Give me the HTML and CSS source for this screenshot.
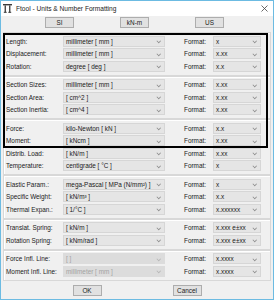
FILE: index.html
```html
<!DOCTYPE html>
<html lang="en">
<head>
  <meta charset="UTF-8">
  <title>Ftool - Units &amp; Number Formatting</title>
  <link rel="stylesheet" href="styles.css">
</head>
<body>
  <div class="window">
    <!-- Title Bar -->
    <div class="titlebar">
      <svg class="app-icon" width="9" height="9" viewBox="0 0 9 9">
        <rect x="0" y="0" width="9" height="1.4" fill="#3a3a3a"/>
        <rect x="1.6" y="1.4" width="1.3" height="7" fill="#3a3a3a"/>
        <rect x="6.1" y="1.4" width="1.3" height="7" fill="#3a3a3a"/>
        <rect x="0.8" y="7.8" width="2.9" height="1" fill="#3a3a3a"/>
        <rect x="5.3" y="7.8" width="2.9" height="1" fill="#3a3a3a"/>
      </svg>
      <span class="title">Ftool - Units &amp; Number Formatting</span>
      <svg class="close" width="7" height="7" viewBox="0 0 7 7">
        <path d="M0.5 0.5 L6.5 6.5 M6.5 0.5 L0.5 6.5" stroke="#444" stroke-width="0.8" fill="none"/>
      </svg>
    </div>

    <!-- Unit System Presets -->
    <div class="presets">
      <button class="btn">SI</button>
      <button class="btn">kN-m</button>
      <button class="btn">US</button>
    </div>

    <div class="groups">
      <div class="group">
        <div class="row">
          <span class="label">Length:</span>
          <div class="combo">millimeter [ mm ]</div>
          <span class="fmt-label">Format:</span>
          <div class="combo">x</div>
        </div>
        <div class="row">
          <span class="label">Displacement:</span>
          <div class="combo">millimeter [ mm ]</div>
          <span class="fmt-label">Format:</span>
          <div class="combo">x.xx</div>
        </div>
        <div class="row">
          <span class="label">Rotation:</span>
          <div class="combo">degree [ deg ]</div>
          <span class="fmt-label">Format:</span>
          <div class="combo">x.x</div>
        </div>
      </div>

      <div class="group">
        <div class="row">
          <span class="label">Section Sizes:</span>
          <div class="combo">millimeter [ mm ]</div>
          <span class="fmt-label">Format:</span>
          <div class="combo">x.xx</div>
        </div>
        <div class="row">
          <span class="label">Section Area:</span>
          <div class="combo">[ cm^2 ]</div>
          <span class="fmt-label">Format:</span>
          <div class="combo">x.xx</div>
        </div>
        <div class="row">
          <span class="label">Section Inertia:</span>
          <div class="combo">[ cm^4 ]</div>
          <span class="fmt-label">Format:</span>
          <div class="combo">x.xx</div>
        </div>
      </div>

      <div class="group">
        <div class="row">
          <span class="label">Force:</span>
          <div class="combo">kilo-Newton [ kN ]</div>
          <span class="fmt-label">Format:</span>
          <div class="combo">x.x</div>
        </div>
        <div class="row">
          <span class="label">Moment:</span>
          <div class="combo">[ kNcm ]</div>
          <span class="fmt-label">Format:</span>
          <div class="combo">x.xx</div>
        </div>
        <div class="row">
          <span class="label">Distrib. Load:</span>
          <div class="combo">[ kN/m ]</div>
          <span class="fmt-label">Format:</span>
          <div class="combo">x.xx</div>
        </div>
        <div class="row">
          <span class="label">Temperature:</span>
          <div class="combo">centigrade [ °C ]</div>
          <span class="fmt-label">Format:</span>
          <div class="combo">x</div>
        </div>
      </div>

      <div class="group">
        <div class="row">
          <span class="label">Elastic Param.:</span>
          <div class="combo">mega-Pascal [ MPa (N/mm²) ]</div>
          <span class="fmt-label">Format:</span>
          <div class="combo">x</div>
        </div>
        <div class="row">
          <span class="label">Specific Weight:</span>
          <div class="combo">[ kN/m³ ]</div>
          <span class="fmt-label">Format:</span>
          <div class="combo">x.x</div>
        </div>
        <div class="row">
          <span class="label">Thermal Expan.:</span>
          <div class="combo">[ 1/°C ]</div>
          <span class="fmt-label">Format:</span>
          <div class="combo">x.xxxxxx</div>
        </div>
      </div>

      <div class="group">
        <div class="row">
          <span class="label">Translat. Spring:</span>
          <div class="combo">[ kN/m ]</div>
          <span class="fmt-label">Format:</span>
          <div class="combo">x.xxx e±xx</div>
        </div>
        <div class="row">
          <span class="label">Rotation Spring:</span>
          <div class="combo">[ kNm/rad ]</div>
          <span class="fmt-label">Format:</span>
          <div class="combo">x.xxx e±xx</div>
        </div>
      </div>

      <div class="group">
        <div class="row">
          <span class="label">Force Infl. Line:</span>
          <div class="combo disabled">[ ]</div>
          <span class="fmt-label">Format:</span>
          <div class="combo">x.xxxx</div>
        </div>
        <div class="row">
          <span class="label">Moment Infl. Line:</span>
          <div class="combo disabled">millimeter [ mm ]</div>
          <span class="fmt-label">Format:</span>
          <div class="combo">x.xxxx</div>
        </div>
      </div>
    </div>

    <!-- Dialog Buttons -->
    <div class="footer">
      <button class="btn">OK</button>
      <button class="btn">Cancel</button>
    </div>

    <!-- Annotation frame -->
    <div class="highlight"></div>
  </div>
</body>
</html>
```

FILE: styles.css
```css
:root {
  --frame: #6cbbe2;
  --dialog-bg: #f0f0f0;
  --combo-bg: #e5e5e5;
  --combo-border: #d6d6d6;
  --text: #1a1a1a;
}

body {
  margin: 0;
  font-family: 'Liberation Sans', Arial, sans-serif;
  font-size: 6.4px;
  color: var(--text);
}

.window {
  position: relative;
  width: 274px;
  height: 300px;
  box-sizing: border-box;
  border: 1px solid var(--frame);
  background: var(--dialog-bg);
  display: flex;
  flex-direction: column;
}

/* Title Bar */
.titlebar {
  height: 15px;
  background: #fff;
  display: flex;
  align-items: center;
  padding: 0 5px 0 2px;
  flex-shrink: 0;
}

.app-icon {
  margin-right: 4px;
}

.title {
  flex: 1;
  font-size: 6.6px;
  color: #222;
}

/* Buttons */
.btn {
  font-family: inherit;
  font-size: 6.4px;
  color: var(--text);
  width: 29px;
  height: 11px;
  padding: 0;
  background: #e1e1e1;
  border: 1px solid #adadad;
  border-radius: 0;
}

.presets {
  display: flex;
  gap: 46px;
  padding: 1px 0 4px 44px;
  flex-shrink: 0;
}

/* Groups */
.groups {
  margin: 0 2px;
}

.group {
  border: 1px solid #d8d8d8;
  box-shadow: inset 1px 1px 0 #fff;
  padding: 2px 2px;
}

.row {
  height: 12.5px;
  display: grid;
  grid-template-columns: 57px 102px 41px 55px;
  column-gap: 0;
  align-items: center;
}

.row .combo:last-child {
  margin-left: 7px;
}

.label {
  white-space: nowrap;
}

.fmt-label {
  text-align: right;
}

.combo {
  position: relative;
  height: 11px;
  box-sizing: border-box;
  border: 1px solid var(--combo-border);
  background: var(--combo-bg);
  padding: 0 10px 0 2px;
  line-height: 9px;
  white-space: nowrap;
  overflow: hidden;
}

.combo::after {
  content: '';
  position: absolute;
  right: 4px;
  top: 2.5px;
  width: 2.5px;
  height: 2.5px;
  border-right: 1px solid #8a8a8a;
  border-bottom: 1px solid #8a8a8a;
  transform: rotate(45deg) scale(0.8);
}

.combo.disabled {
  background: #dcdcdc;
  border-color: #dcdcdc;
  color: #a3a3a3;
}

.combo.disabled::after {
  border-color: #b4b4b4;
}

/* Footer */
.footer {
  display: flex;
  justify-content: center;
  gap: 71px;
  padding-top: 4px;
}

/* Annotation around first rows */
.highlight {
  position: absolute;
  left: 2px;
  top: 32px;
  width: 265px;
  height: 115px;
  box-sizing: border-box;
  border: 2px solid #000;
  pointer-events: none;
}
```
